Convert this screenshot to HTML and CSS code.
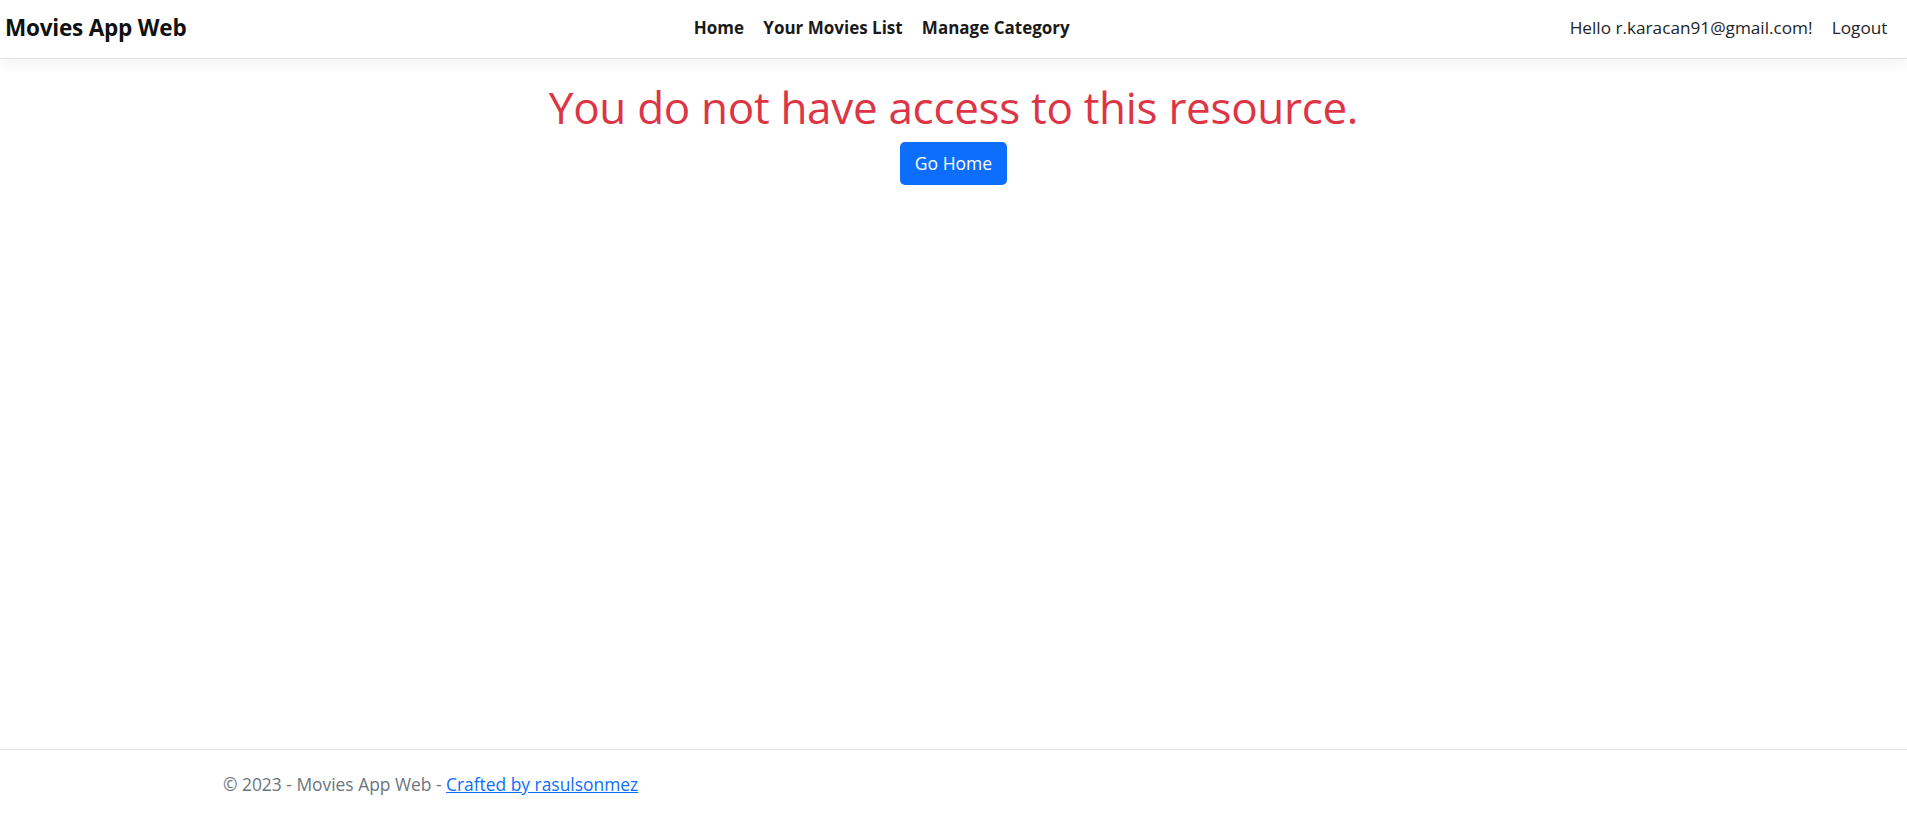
FILE: index.html
```html
<!DOCTYPE html>
<html lang="en">
<head>
<meta charset="utf-8">
<title>Movies App Web</title>
<link rel="stylesheet" href="styles.css">
</head>
<body>
<div class="page">
  <header class="navbar">
    <a class="brand" href="#">Movies App Web</a>
    <nav class="nav-center">
      <a class="nav-link bold" href="#">Home</a>
      <a class="nav-link bold" href="#">Your Movies List</a>
      <a class="nav-link bold" href="#">Manage Category</a>
    </nav>
    <div class="nav-right">
      <span class="nav-link">Hello r.karacan91@gmail.com!</span>
      <a class="nav-link" href="#">Logout</a>
    </div>
  </header>
  <main class="main">
    <h1 class="title">You do not have access to this resource.</h1>
    <a class="btn" href="#">Go Home</a>
  </main>
  <footer class="footer">
    <div class="footer-inner">© 2023 - Movies App Web - <a class="footer-link" href="#">Crafted by rasulsonmez</a></div>
  </footer>
</div>
</body>
</html>
```
FILE: styles.css
```css
* { box-sizing: border-box; }
html, body { margin: 0; padding: 0; }
body {
  font-family: "Open Sans", "Noto Sans", "Liberation Sans", sans-serif;
  color: #212529;
  background: #fff;
  overflow: hidden;
  height: 815px;
}
a { text-decoration: none; }
.page { display: flex; flex-direction: column; height: 815px; }
.navbar {
  height: 59px;
  flex: none;
  display: flex;
  align-items: center;
  padding: 0 10px 4px 5px;
  border-bottom: 1px solid #dee2e6;
  box-shadow: 0 5px 14px rgba(0,0,0,.05);
  position: relative;
  z-index: 1;
}
.brand {
  font-size: 22.5px;
  font-weight: 700;
  color: #111;
  letter-spacing: -0.2px;
}
.nav-center {
  flex: 1;
  display: flex;
  justify-content: center;
  padding-left: 17px;
}
.nav-right { display: flex; }
.nav-link {
  font-size: 17.2px;
  color: #212529;
  padding: 0 9.6px;
}
.bold { font-weight: 700; color: #1a1a1a; font-size: 17px; }
.main {
  flex: 1;
  display: flex;
  flex-direction: column;
  align-items: center;
  padding-top: 19px;
}
.title {
  margin: 0 0 6px;
  font-size: 44px;
  font-weight: 500;
  line-height: 58px;
  color: #dc3545;
  letter-spacing: -0.3px;
}
.btn {
  display: inline-block;
  background: #0d6efd;
  color: #fff;
  font-size: 17.5px;
  line-height: 29px;
  padding: 7px 15px;
  border-radius: 5px;
}
.footer {
  flex: none;
  height: 66px;
  border-top: 1px solid #dee2e6;
}
.footer-inner {
  padding-left: 223px;
  line-height: 68px;
  font-size: 17.4px;
  color: #6c757d;
  white-space: nowrap;
}
.footer-link { color: #0d6efd; text-decoration: underline; }
```
